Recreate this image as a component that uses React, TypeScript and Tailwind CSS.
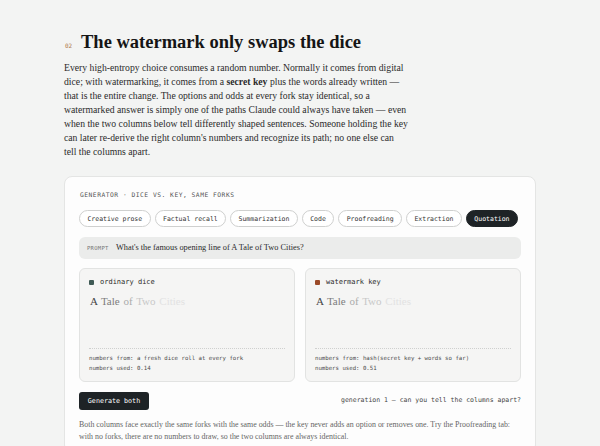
import React from "react";

const serif = { fontFamily: '"Liberation Serif", "DejaVu Serif", serif' };
const mono = { fontFamily: '"DejaVu Sans Mono", "Liberation Mono", monospace' };

const pills = [
  "Creative prose",
  "Factual recall",
  "Summarization",
  "Code",
  "Proofreading",
  "Extraction",
  "Quotation",
];

function Column({
  dot,
  label,
  from,
  used,
}: {
  dot: string;
  label: string;
  from: string;
  used: string;
}) {
  return (
    <div className="flex flex-col rounded-md border border-[#e2e3e2] bg-[#f5f5f4] px-[9px] pt-[8px] pb-[8px] h-[114px]">
      <div className="flex items-center gap-[6px] h-[10px]">
        <span className={`w-[5px] h-[5px] rounded-[1px] ${dot}`} />
        <span style={mono} className="text-[7px] leading-[10px] text-[#2a2a2a]">
          {label}
        </span>
      </div>
      <div style={serif} className="mt-[7px] text-[11px] leading-[14px] pl-[1px] [word-spacing:1px]">
        <span className="text-[#444]">A </span>
        <span className="text-[#7d7d7d]">Tale </span>
        <span className="text-[#ababab]">of </span>
        <span className="text-[#c8c8c8]">Two </span>
        <span className="text-[#e2e2e2]">Cities</span>
      </div>
      <div className="flex-1" />
      <div className="border-t border-dotted border-[#cfd0cf]" />
      <div style={mono} className="mt-[5px] text-[5.7px] leading-[9.5px] text-[#4a4a4a] whitespace-nowrap">
        <div>{from}</div>
        <div>{used}</div>
      </div>
    </div>
  );
}

export default function App() {
  return (
    <div className="min-h-screen bg-[#f3f4f3] overflow-hidden">
      <div className="w-[472px] mx-auto pt-[30px]">
        <div className="flex items-baseline h-[24px]">
          <span style={mono} className="text-[6px] text-[#b07a4b] ml-[1px] w-[16px]">
            02
          </span>
          <h1 style={serif} className="text-[18.5px] leading-[24px] font-bold text-[#151515]">
            The watermark only swaps the dice
          </h1>
        </div>
        <p style={serif} className="mt-[7px] text-[9.7px] leading-[14px] text-[#2b2b2b] whitespace-nowrap">
          Every high-entropy choice consumes a random number. Normally it comes from digital
          <br />
          dice; with watermarking, it comes from a <b>secret key</b> plus the words already written —
          <br />
          that is the entire change. The options and odds at every fork stay identical, so a
          <br />
          watermarked answer is simply one of the paths Claude could always have taken — even
          <br />
          when the two columns below tell differently shaped sentences. Someone holding the key
          <br />
          can later re-derive the right column's numbers and recognize its path; no one else can
          <br />
          tell the columns apart.
        </p>

        <div className="mt-[17px] rounded-lg border border-[#e4e5e4] bg-[#fdfdfd] px-[14px] pt-[13px] pb-[10px]">
          <div style={mono} className="text-[6.3px] leading-[10px] tracking-[0.5px] text-[#555] pl-[1px]">
            GENERATOR · DICE VS. KEY, SAME FORKS
          </div>
          <div className="mt-[10px] flex gap-[4px]">
            {pills.map((p) => (
              <span
                key={p}
                style={mono}
                className={`shrink-0 whitespace-nowrap rounded-full border px-[7.4px] py-[2.5px] text-[6.5px] leading-[10px] ${
                  p === "Quotation"
                    ? "bg-[#1e2326] border-[#1e2326] text-white"
                    : "bg-white border-[#cfd0cf] text-[#333]"
                }`}
              >
                {p}
              </span>
            ))}
          </div>
          <div className="mt-[10px] flex items-center h-[22px] rounded-md bg-[#ebeceb] px-[8px]">
            <span style={mono} className="text-[5.5px] tracking-[0.3px] text-[#777] w-[29px]">
              PROMPT
            </span>
            <span style={serif} className="text-[8.3px] text-[#2a2a2a]">
              What's the famous opening line of A Tale of Two Cities?
            </span>
          </div>
          <div className="mt-[9px] grid grid-cols-2 gap-[10px]">
            <Column
              dot="bg-[#3f5a55]"
              label="ordinary dice"
              from="numbers from: a fresh dice roll at every fork"
              used="numbers used: 0.14"
            />
            <Column
              dot="bg-[#9b4a28]"
              label="watermark key"
              from="numbers from: hash(secret key + words so far)"
              used="numbers used: 0.51"
            />
          </div>
          <div className="mt-[10px] flex items-center justify-between">
            <button
              style={mono}
              className="h-[18px] w-[70px] rounded-[3px] bg-[#1e2326] text-white text-[6.7px]"
            >
              Generate both
            </button>
            <span style={mono} className="text-[6.5px] text-[#444]">
              generation 1 — can you tell the columns apart?
            </span>
          </div>
          <p style={serif} className="mt-[9px] text-[7.9px] leading-[11.5px] text-[#666] whitespace-nowrap">
            Both columns face exactly the same forks with the same odds — the key never adds an option or removes one. Try the Proofreading tab:
            <br />
            with no forks, there are no numbers to draw, so the two columns are always identical.
          </p>
        </div>
      </div>
    </div>
  );
}
